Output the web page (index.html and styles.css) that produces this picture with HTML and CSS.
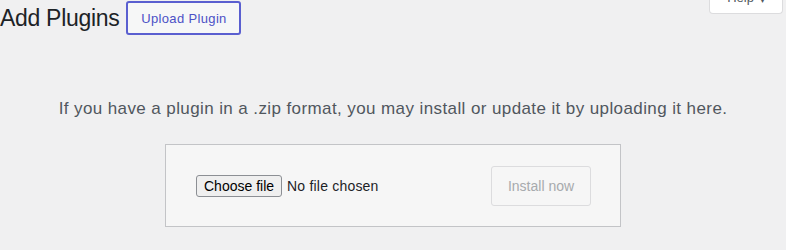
FILE: index.html
```html
<!DOCTYPE html>
<html>
<head>
<meta charset="utf-8">
<link rel="stylesheet" href="styles.css">
</head>
<body>
<div class="help-tab"><span>Help</span><span class="caret">▾</span></div>
<div class="header">
  <h1 class="title">Add Plugins</h1>
  <button class="upload-btn">Upload Plugin</button>
</div>
<p class="install-help">If you have a plugin in a .zip format, you may install or update it by uploading it here.</p>
<div class="form-wrap">
  <form class="upload-form">
    <div class="file-field">
      <span class="choose-btn">Choose file</span>
      <span class="no-file">No file chosen</span>
    </div>
    <span class="install-btn">Install now</span>
  </form>
</div>
</body>
</html>
```
FILE: styles.css
```css
html, body {
  margin: 0;
  padding: 0;
}
body {
  background: #f0f0f1;
  font-family: "Liberation Sans", Arial, sans-serif;
  color: #1d2327;
  width: 786px;
  height: 250px;
  overflow: hidden;
  position: relative;
}
.help-tab {
  position: absolute;
  right: 3px;
  top: -12px;
  width: 74px;
  height: 26px;
  box-sizing: border-box;
  background: #fff;
  border: 1px solid #dcdcde;
  border-top: none;
  border-radius: 0 0 4px 4px;
  font-size: 13px;
  color: #50575e;
  display: flex;
  justify-content: center;
  align-items: flex-end;
  padding-bottom: 8px;
  gap: 6px;
}
.help-tab .caret {
  font-size: 10px;
}
.header {
  display: flex;
  align-items: center;
  gap: 7px;
  padding-top: 1px;
}
.title {
  margin: 0;
  font-size: 23px;
  font-weight: 400;
  line-height: 34px;
  color: #1d2327;
  letter-spacing: -0.3px;
}
.upload-btn {
  font-family: "Liberation Sans", Arial, sans-serif;
  margin-left: 0;
  height: 34px;
  width: 115px;
  box-sizing: border-box;
  border: 2px solid #5a5fd0;
  border-radius: 3px;
  background: #f6f7f7;
  color: #4c51c6;
  font-size: 13px;
  letter-spacing: 0.35px;
  padding: 0;
}
.install-help {
  margin: 62px 0 0;
  text-align: center;
  font-size: 17px;
  letter-spacing: 0.4px;
  line-height: 24px;
  color: #50575e;
}
.form-wrap {
  display: flex;
  justify-content: center;
  margin-top: 23px;
}
.upload-form {
  margin: 0;
  width: 456px;
  height: 83px;
  box-sizing: border-box;
  background: #f6f6f6;
  border: 1px solid #c3c4c7;
  display: flex;
  justify-content: space-between;
  align-items: center;
  padding: 0 29px 0 30px;
}
.file-field {
  display: flex;
  align-items: center;
  gap: 5px;
  font-size: 14px;
  color: #1d2327;
}
.choose-btn {
  display: inline-block;
  height: 22px;
  line-height: 20px;
  box-sizing: border-box;
  padding: 0 7px;
  border: 1px solid #8c8f94;
  border-radius: 3px;
  background: #efefef;
  color: #000;
  font-size: 14px;
}
.no-file {
  color: #1d2327;
  letter-spacing: 0.2px;
}
.install-btn {
  display: inline-block;
  width: 100px;
  height: 40px;
  box-sizing: border-box;
  line-height: 38px;
  text-align: center;
  border: 1px solid #dcdcde;
  border-radius: 3px;
  background: #f6f6f6;
  color: #a7aaad;
  font-size: 14px;
}
```
